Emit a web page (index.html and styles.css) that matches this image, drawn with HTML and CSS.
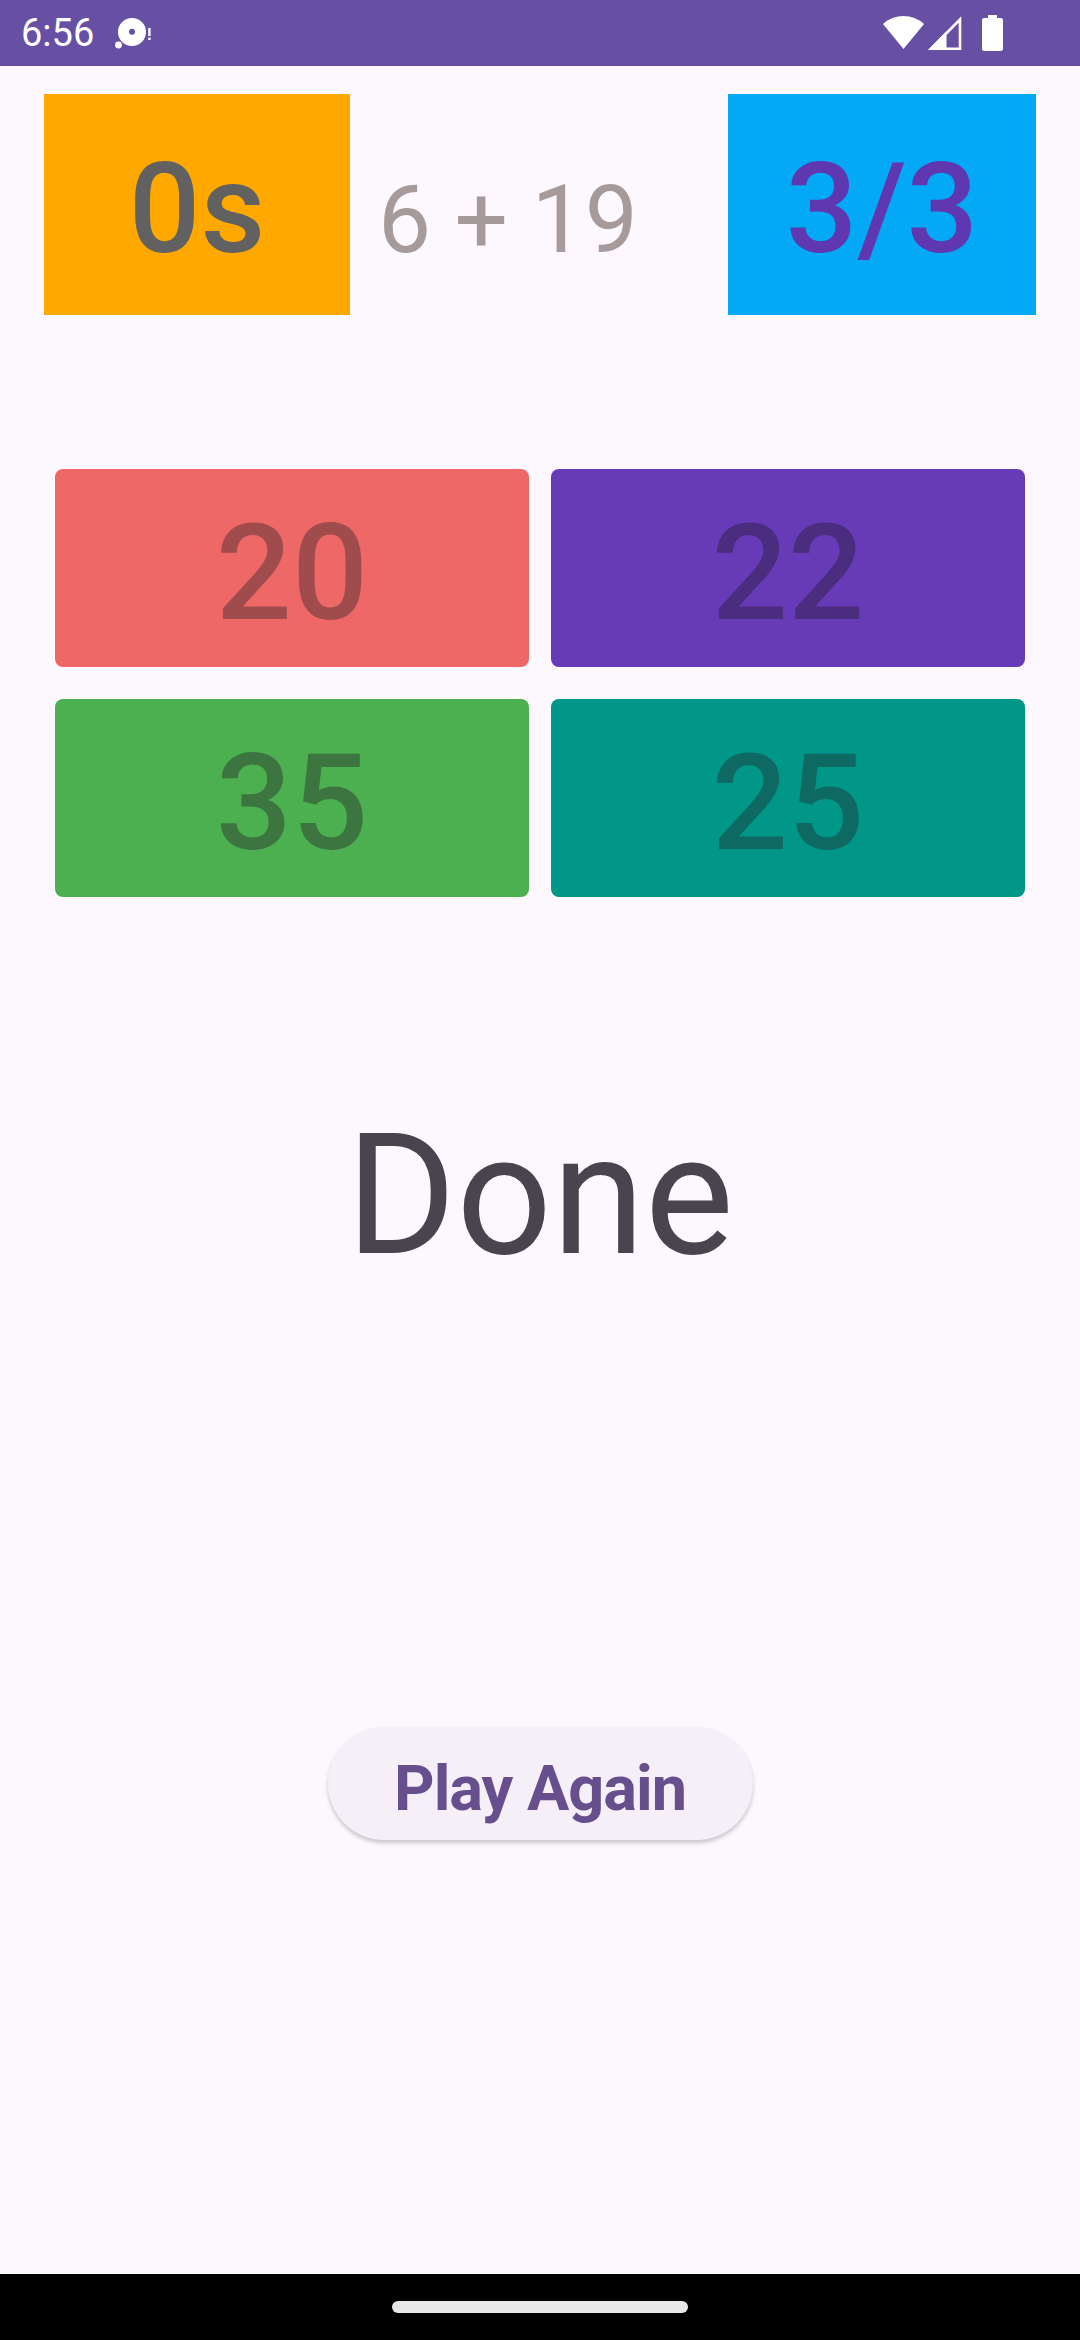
FILE: index.html
```html
<!DOCTYPE html>
<html lang="en">
<head>
<meta charset="utf-8">
<title>Brain Trainer</title>
<link rel="stylesheet" href="styles.css">
</head>
<body>
<div class="screen">
  <header class="status-bar">
    <span class="clock">6:56</span>
    <svg class="notif" width="44" height="66" viewBox="112 0 44 66" aria-hidden="true">
      <path fill="#fff" fill-rule="evenodd" d="M132 18a14 14 0 1 1 0 28a14 14 0 1 1 0-28zM132 28.8a3 3 0 1 0 0 6a3 3 0 1 0 0-6z"/>
      <circle cx="118.5" cy="45" r="3.4" fill="#fff"/>
      <rect x="148.2" y="28" width="2.4" height="8" fill="#fff"/>
      <rect x="148.2" y="37.6" width="2.4" height="2.4" fill="#fff"/>
    </svg>
    <div class="sys-icons">
      <svg class="wifi" width="41" height="66" viewBox="0 0 41 66" aria-hidden="true">
        <path fill="#fff" d="M0 24 A30.3 30.3 0 0 1 41 24 L20.5 49 Z"/>
      </svg>
      <svg class="signal" width="34" height="66" viewBox="0 0 34 66" aria-hidden="true">
        <path fill="none" stroke="#fff" stroke-width="2.6" stroke-linejoin="miter" d="M32 19.5 L32 48.7 L3.2 48.7 Z"/>
        <path fill="#fff" d="M0 50 L18.5 50 L18.5 31 Z"/>
      </svg>
      <svg class="battery" width="21" height="66" viewBox="0 0 21 66" aria-hidden="true">
        <rect x="6" y="15" width="9" height="4" fill="#fff"/>
        <rect x="0" y="18" width="21" height="33" rx="2.2" fill="#fff"/>
      </svg>
    </div>
  </header>

  <main class="game">
    <div class="top-row">
      <div class="timer">0s</div>
      <div class="question">6 + 19</div>
      <div class="score">3/3</div>
    </div>

    <div class="answers">
      <div class="answer answer-red">20</div>
      <div class="answer answer-purple">22</div>
      <div class="answer answer-green">35</div>
      <div class="answer answer-teal">25</div>
    </div>

    <div class="result">Done</div>

    <div class="play-again">Play Again</div>
  </main>

  <footer class="nav-bar">
    <div class="nav-handle"></div>
  </footer>
</div>
</body>
</html>
```

FILE: styles.css
```css
* {
  box-sizing: border-box;
}

html, body {
  margin: 0;
  padding: 0;
}

body {
  width: 1080px;
  height: 2340px;
  background: #fdf7fe;
  font-family: Roboto, "Noto Sans", sans-serif;
  overflow: hidden;
}

.screen {
  display: flex;
  flex-direction: column;
  width: 1080px;
  height: 2340px;
}

/* ---------- status bar ---------- */
.status-bar {
  height: 66px;
  flex: 0 0 66px;
  background: #6750a4;
  display: flex;
  align-items: flex-start;
  padding: 0 77px 0 21px;
  color: #fff;
}

.clock {
  font-size: 38px;
  line-height: 66px;
  font-weight: 400;
  letter-spacing: 0;
}

.notif {
  display: block;
  margin-left: 18px;
}

.sys-icons {
  margin-left: auto;
  display: flex;
}

.sys-icons svg {
  display: block;
}

.signal {
  margin-left: 4px;
}

.battery {
  margin-left: 20px;
}

/* ---------- game area ---------- */
.game {
  flex: 1 1 auto;
  display: flex;
  flex-direction: column;
}

.top-row {
  display: flex;
  align-items: flex-start;
  margin-top: 28px;
  padding: 0 44px;
}

.timer,
.score {
  height: 221px;
  padding-top: 41px;
  font-size: 126px;
  font-weight: 500;
  line-height: normal;
  text-align: center;
}

.timer {
  width: 306px;
  background: #ffa800;
  color: #616161;
}

.score {
  width: 308px;
  margin-left: auto;
  background: #03a9f4;
  color: #5e37b1;
}

.question {
  margin-left: 28px;
  margin-top: 70px;
  font-size: 94.5px;
  font-weight: 400;
  line-height: normal;
  color: #a69a9a;
  white-space: nowrap;
}

.answers {
  display: grid;
  grid-template-columns: 1fr 1fr;
  gap: 32px 22px;
  margin: 154px 55px 0;
}

.answer {
  height: 198px;
  border-radius: 8px;
  padding-top: 26px;
  font-size: 134px;
  font-weight: 500;
  line-height: normal;
  text-align: center;
}

.answer-red {
  background: #ee6868;
  color: #a04c4d;
}

.answer-purple {
  background: #673ab7;
  color: #4a2d7e;
}

.answer-green {
  background: #4caf50;
  color: #3d7541;
}

.answer-teal {
  background: #009688;
  color: #0d6961;
}

.result {
  margin-top: 200px;
  font-size: 168px;
  font-weight: 400;
  line-height: normal;
  color: #49454f;
  text-align: center;
}

.play-again {
  align-self: center;
  margin-top: 433px;
  width: 425px;
  height: 113px;
  border-radius: 57px;
  background: #f5eff7;
  box-shadow: 0 3px 4px rgba(0, 0, 0, 0.2);
  padding-top: 25px;
  font-size: 63px;
  font-weight: 700;
  letter-spacing: -1px;
  line-height: normal;
  color: #674e8c;
  text-align: center;
}

/* ---------- nav bar ---------- */
.nav-bar {
  flex: 0 0 66px;
  height: 66px;
  background: #000;
  display: flex;
  justify-content: center;
  padding-top: 27px;
}

.nav-handle {
  width: 296px;
  height: 12px;
  border-radius: 6px;
  background: #e8e8e8;
}
```
